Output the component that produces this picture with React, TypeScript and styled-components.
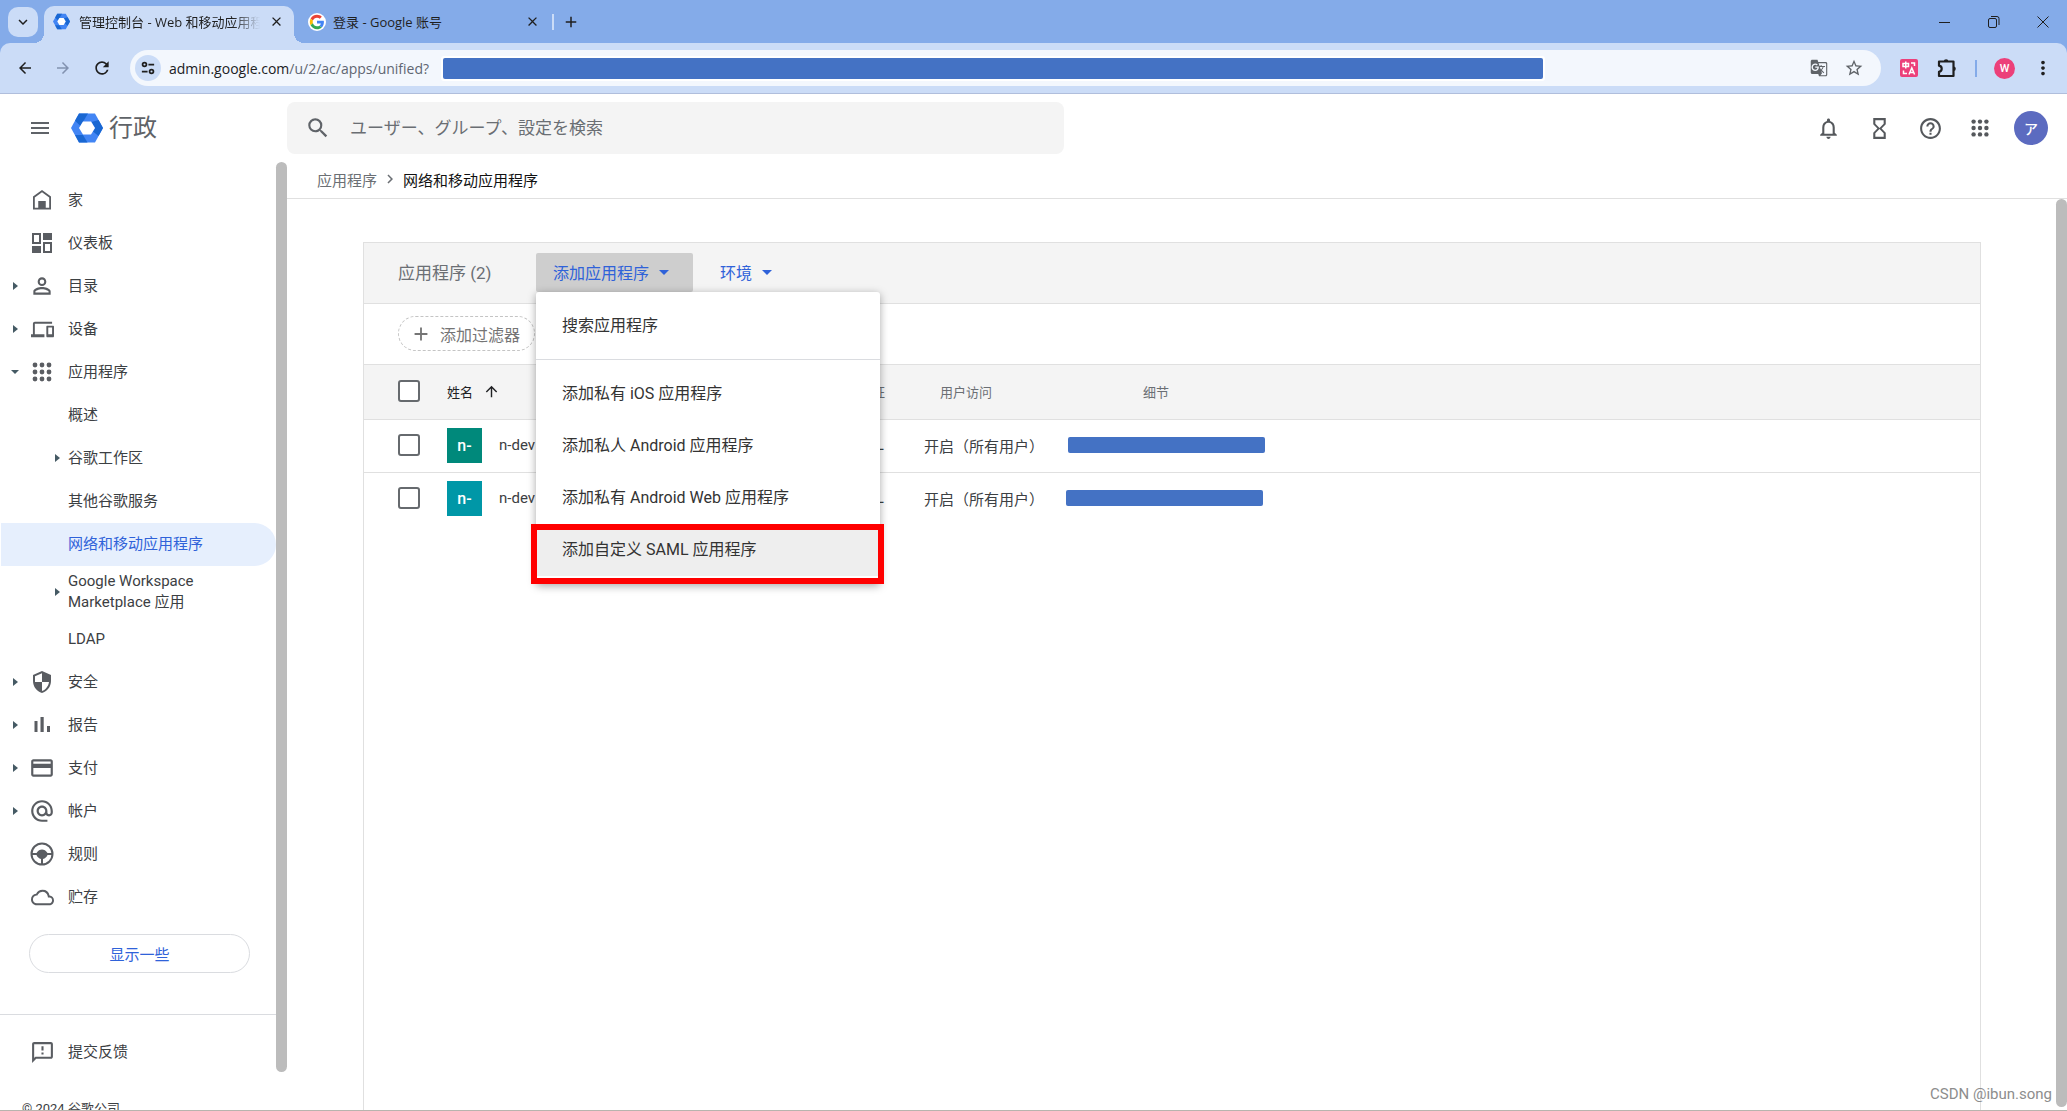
import React from 'react';
import styled, { createGlobalStyle, css } from 'styled-components';
import {
  MdPersonOutline, MdDevices, MdCreditCard, MdAlternateEmail, MdOutlineCloud, MdOutlineFeedback,
  MdSearch, MdMenu, MdNotificationsNone, MdHelpOutline, MdArrowBack, MdArrowForward, MdRefresh,
  MdStarBorder, MdMoreVert, MdArrowUpward, MdAdd, MdClose, MdGTranslate, MdChevronRight,
  MdArrowDropDown, MdHourglassEmpty, MdKeyboardArrowDown,
} from 'react-icons/md';

const uiFont = `Roboto, "Noto Sans CJK SC", sans-serif`;
const chromeFont = `"Open Sans", "Noto Sans CJK SC", sans-serif`;

const Global = createGlobalStyle`
  *, *::before, *::after { box-sizing: border-box; }
  body { margin: 0; font-family: ${uiFont}; font-size: 15px; color: #3c4043; background: #fff; overflow: hidden; }
  button, input { font: inherit; color: inherit; }
  button { border: 0; background: none; padding: 0; margin: 0; cursor: pointer; }
  a { color: inherit; text-decoration: none; }
  ul { list-style: none; margin: 0; padding: 0; }
  svg { display: block; flex: none; }
`;

const Shell = styled.div`
  height: 100vh; display: flex; flex-direction: column; overflow: hidden;
  border-bottom: 1px solid #b8b4ae;
`;

/* Browser chrome */
const Chrome = styled.div`
  flex: none; background: #84abe9; color: #1f1f1f; font-family: ${chromeFont};
`;
const TabStrip = styled.div`
  height: 43px; display: flex; align-items: center; padding-left: 8px; font-size: 13px;
`;
const TabSearch = styled.button`
  width: 30px; height: 30px; border-radius: 10px; background: #cbdcf7; display: grid; place-items: center; margin-right: 6px;
`;
const Tab = styled.div<{ $active?: boolean }>`
  position: relative; width: ${p => (p.$active ? 250 : 256)}px; height: 37px; align-self: flex-end;
  display: flex; align-items: center; gap: ${p => (p.$active ? 9 : 7)}px;
  padding: 0 10px 6px ${p => (p.$active ? 9 : 14)}px;
  ${p => p.$active && css`
    background: #cbdcf7; border-radius: 10px 10px 0 0;
    &::before, &::after { content: ''; position: absolute; bottom: 0; width: 10px; height: 10px; }
    &::before { left: -10px; background: radial-gradient(circle at 0 0, transparent 10px, #cbdcf7 10px); }
    &::after { right: -10px; background: radial-gradient(circle at 100% 0, transparent 10px, #cbdcf7 10px); }
  `}
`;
const TabTitle = styled.span<{ $fade?: boolean }>`
  flex: 1; min-width: 0; overflow: hidden; white-space: nowrap; line-height: 20px;
  ${p => p.$fade && css`mask-image: linear-gradient(to right, #000 85%, transparent 100%);`}
`;
const TabDivider = styled.span` width: 2px; height: 16px; background: #cbdcf7; margin: 0 8px 0 2px; `;
const WindowControls = styled.div` margin-left: auto; display: flex; `;
const WindowButton = styled.button` width: 49px; height: 43px; display: grid; place-items: center; `;

const Toolbar = styled.div`
  height: 51px; display: flex; align-items: center; padding: 0 7px 0 12px; border-radius: 10px 10px 0 0;
  background: #cbdcf7; border-bottom: 1px solid #b0bedc;
`;
const ToolButton = styled.button<{ $dim?: boolean; $w?: number }>`
  width: ${p => p.$w ?? 38}px; height: 34px; display: grid; place-items: center; color: ${p => (p.$dim ? '#8292b0' : '#1f1f1f')};
`;
const AddressBar = styled.div`
  flex: 1; height: 36px; border-radius: 18px; background: #f3f7fd; margin: 0 9px 0 14px;
  display: flex; align-items: center; padding: 0 17px 0 5px;
`;
const SiteInfo = styled.button`
  width: 26px; height: 26px; border-radius: 13px; background: #cbdcf7; display: grid; place-items: center; margin-right: 8px;
`;
const Url = styled.span` min-width: 272px; font-size: 14px; color: #5f6672; white-space: nowrap; `;
const Host = styled.span` color: #202124; `;
const Redaction = styled.span<{ $w: number; $h?: number }>`
  display: block; width: ${p => p.$w}px; height: ${p => p.$h ?? 16}px; border-radius: 2px; background: #4472c4;
`;
const UrlMask = styled.span` flex: none; background: #fff; border-radius: 3px; padding: 2px; `;
const Spacer = styled.span` flex: 1; `;
const Profile = styled.span<{ $size: number; $bg: string; $fs: number }>`
  width: ${p => p.$size}px; height: ${p => p.$size}px; border-radius: 50%; background: ${p => p.$bg}; color: #fff;
  display: grid; place-items: center; font: 500 ${p => p.$fs}px Roboto, "Noto Sans CJK JP", sans-serif;
`;
const ToolDivider = styled.span` width: 2px; height: 17px; background: #84abe9; margin: 0 17px 0 9px; `;
const ProfileButton = styled.button` margin-right: 11px; `;

/* Admin console header */
const Header = styled.header` flex: none; height: 68px; display: flex; align-items: center; padding: 0 19px 0 28px; color: #5f6368; `;
const Brand = styled.a` width: 216px; display: flex; align-items: center; gap: 6px; margin-left: 19px; font-size: 24px; line-height: 32px; `;
const SearchBox = styled.label`
  width: 777px; height: 52px; border-radius: 8px; background: #f4f4f4; display: flex; align-items: center; gap: 19px; padding: 0 18px;
`;
const SearchInput = styled.input`
  flex: 1; border: 0; background: none; outline: 0; padding: 0; font: 17px Roboto, "Noto Sans CJK JP", sans-serif;
  &::placeholder { color: #6a6e73; opacity: 1; }
`;
const HeaderActions = styled.div` margin: 0 23px 0 auto; display: flex; align-items: center; gap: 26px; color: #55585c; `;

/* Body */
const Body = styled.div` flex: 1; min-height: 0; display: flex; `;
const Sidebar = styled.aside` width: 287px; flex: none; display: flex; `;
const SideScroll = styled.div` flex: 1; overflow: hidden; padding-top: 17px; `;
const Thumb = styled.div<{ $bottom: number }>`
  width: 11px; flex: none; border-radius: 6px; background: #bcbcbc; margin: 0 0 ${p => p.$bottom}px;
`;
const NavLink = styled.a<{ $active?: boolean; $tall?: boolean }>`
  height: ${p => (p.$tall ? 52 : 43)}px; display: grid; grid-template-columns: 28px 26px 13px 1fr; align-items: center;
  line-height: ${p => (p.$tall ? 21 : 20)}px; font-size: 15px; border-radius: 0 22px 22px 0; margin-left: 1px; padding-bottom: 1px;
  ${p => p.$active && css`background: #e6effd; color: #2f62d9;`}
`;
const Arrow = styled.span<{ $open?: boolean; $nested?: boolean }>`
  grid-row: 1; grid-column: ${p => (p.$nested ? '2 / 4' : '1')}; justify-self: ${p => (p.$nested ? 'end' : 'center')};
  ${p => p.$nested && css`margin-right: 8px;`}
  width: 0; height: 0; border: 4px solid transparent; color: #455a64;
  ${p => p.$open
    ? css`border-top-color: currentColor; border-bottom-width: 0;`
    : css`border-left-color: currentColor; border-right-width: 0; border-left-width: 5px;`}
`;
const NavIcon = styled.span` grid-row: 1; grid-column: 2; color: #5a5d62; display: grid; place-items: center; `;
const NavText = styled.span` grid-row: 1; grid-column: 4; `;
const ShowSome = styled.button`
  display: block; width: 221px; height: 39px; margin: 15px 0 41px 29px; border: 1px solid #dadce0; border-radius: 20px; color: #2f62d9;
`;
const SideFooter = styled.div` border-top: 1px solid #dadce0; padding-top: 16px; `;
const Copyright = styled.div` padding: 25px 22px 0; font-size: 13px; line-height: 20px; `;

const Main = styled.main` flex: 1; min-width: 0; display: flex; flex-direction: column; `;
const Breadcrumb = styled.nav`
  flex: none; height: 37px; border-bottom: 1px solid #e0e0e0; padding: 0 0 2px 30px; display: flex; align-items: center; gap: 4px; color: #6b6f74;
`;
const Current = styled.span` color: #111; `;
const Content = styled.div` flex: 1; min-height: 0; display: flex; `;
const PanelWrap = styled.div` flex: 1; min-width: 0; padding: 43px 75px 0 76px; display: flex; `;
const Panel = styled.section` flex: 1; border: 1px solid #e0e0e0; border-bottom: 0; `;
const PanelHead = styled.div`
  height: 61px; background: #f4f4f4; border-bottom: 1px solid #e0e0e0; display: flex; align-items: center; padding: 0 0 1px 34px;
`;
const PanelTitle = styled.h1` margin: 0; width: 138px; font-size: 17px; line-height: 20px; font-weight: 400; color: #6b6f74; `;
const MenuAnchor = styled.div` position: relative; margin-right: 10px; `;
const DropButton = styled.button<{ $open?: boolean }>`
  height: 39px; display: flex; align-items: center; gap: 3px; padding: 0 17px 2px; font-size: 16px; color: #2f62d9; border-radius: 2px;
  ${p => p.$open && css`background: #cecece;`}
`;
const Menu = styled.ul`
  position: absolute; top: 100%; left: 0; width: 344px; background: #fff; padding: 8px 0; border-radius: 3px; z-index: 2;
  box-shadow: 0 2px 8px rgba(0,0,0,.35); color: #333;
`;
const MenuButton = styled.button<{ $hover?: boolean }>`
  display: block; width: 100%; height: 52px; padding: 0 26px 4px; text-align: left; font-size: 16px; white-space: nowrap;
  background: ${p => (p.$hover ? '#eee' : 'none')};
`;
const MenuRule = styled.li` height: 1px; background: #dadce0; margin: 7px 0 8px; `;
const MarkedItem = styled.li`
  position: relative;
  &::after { content: ''; position: absolute; top: 0; left: -5px; right: -4px; bottom: -8px; border: 6px solid #f00; pointer-events: none; }
`;
const FilterRow = styled.div` height: 60px; display: flex; align-items: center; padding: 0 0 1px 34px; `;
const FilterChip = styled.button`
  height: 35px; border: 1px dashed #c4c4c4; border-radius: 18px; display: flex; align-items: center; gap: 8px; padding: 0 14px 0 11px;
  font-size: 16px; color: #757575;
`;
const Table = styled.table` width: 100%; border-collapse: collapse; table-layout: fixed; text-align: left; `;
const Th = styled.th<{ $strong?: boolean; $pad?: number }>`
  height: 55px; padding: 0 0 2px ${p => p.$pad ?? 0}px; font-size: 13px; font-weight: 400; background: #f4f4f4; white-space: nowrap;
  border-top: 1px solid #e0e0e0; border-bottom: 1px solid #e0e0e0; color: ${p => (p.$strong ? '#202124' : '#6b6f74')};
`;
const Td = styled.td<{ $pad?: number }>` height: 53px; padding: 0 0 2px ${p => p.$pad ?? 0}px; white-space: nowrap; `;
const Tr = styled.tr` & + & { border-top: 1px solid #e0e0e0; } `;
const Check = styled.input`
  appearance: none; display: block; width: 22px; height: 22px; margin: 0; border: 2px solid #666a6e; border-radius: 3px; background: #fff;
`;
const Inline = styled.span<{ $gap: number }>` display: flex; align-items: center; gap: ${p => p.$gap}px; `;
const AppTile = styled.span<{ $bg: string }>`
  width: 35px; height: 35px; background: ${p => p.$bg}; color: #fff; display: grid; place-items: center; font-size: 16px; font-weight: 500;
`;
const Watermark = styled.div`
  position: absolute; right: 15px; bottom: 8px; font: 15px Roboto, sans-serif; color: #8d8d8d;
`;

/* Drawings */
const Ic = ({ size = 24, children }: { size?: number; children: React.ReactNode }) => (
  <svg width={size} height={size} viewBox="0 0 24 24" fill="currentColor" aria-hidden="true">{children}</svg>
);
const HomeIcon = () => <Ic><path d="M3 21.500V8.500L12 2l9 6.500v13zM4.800 9.500v10.200H8.500V13h7v6.700h3.700V9.500L12 4.200z" fillRule="evenodd" /><path d="M8.500 13h7v8h-7z" /></Ic>;
const DashIcon = () => <Ic><path d="M2 2h9v11H2zM4 4v7h5V4zM13 11h9v11h-9zM15 13v7h5v-7z" fillRule="evenodd" /><path d="M13 2h9v7h-9zM2 15h9v7H2z" /></Ic>;
const GridIcon = ({ size = 24 }: { size?: number }) => (
  <Ic size={size}>{[5, 12, 19].flatMap(y => [5, 12, 19].map(x => <circle key={`${x}-${y}`} cx={x} cy={y} r="2.400" />))}</Ic>
);
const ShieldIcon = () => (
  <Ic><path d="M12 1L3 5v6c0 5.550 3.840 10.740 9 12 5.160-1.260 9-6.450 9-12V5zM12 3.200L5 6.300V12h7v8.940c3.720-1.150 6.470-4.820 7-8.940h-7z" fillRule="evenodd" /></Ic>
);
const BarsIcon = () => <Ic><path d="M4.500 8h3v11h-3zM10.500 4h3.200v15h-3.200zM17 13h3v6h-3z" /></Ic>;
const WheelIcon = () => (
  <Ic><circle cx="12" cy="12" r="10.500" fill="none" stroke="currentColor" strokeWidth="2" />
    <path d="M2 11h4.500C8 8.500 10 7.500 12 7.500s4 1 5.500 3.500H22v2h-4.500c-.8 2-2.500 3.500-4.500 4V22h-2v-5c-2-.5-3.700-2-4.500-4H2z" /></Ic>
);
const PuzzleIcon = () => (
  <svg width="22" height="22" viewBox="0 0 22 22" fill="none" stroke="currentColor" strokeWidth="2.200" strokeLinejoin="round" aria-hidden="true">
    <path d="M3 4.500h14.500V19H3v-4.200c3.600-.6 3.600-5.500 0-6.100z" />
    <path d="M7.800 4.500a2.300 2.300 0 0 1 4.600 0zM17.500 9.500a2.300 2.300 0 0 1 0 4.600z" fill="currentColor" stroke="none" />
  </svg>
);
const HexLogo = ({ size }: { size: number }) => (
  <svg width={size} height={size} viewBox="0 0 32 32" aria-hidden="true">
    <path d="M8 1.500h16l8 14.500-8 14.500H8L0 16z" fill="#4285f4" />
    <path d="M8 1.500h9L12.500 9 9.500 14 4 8.700z" fill="#1967d2" />
    <path d="M27.600 8L32 16l-4.500 8-5.500-4.500 2-3.500-3.500-6z" fill="#1967d2" />
    <path d="M4 23h8l4.500 7.500H8z" fill="#1967d2" />
    <path d="M12 9.500h8l4 6.500-4 6.500h-8L8 16z" fill="#fff" />
  </svg>
);
const GoogleLogo = () => (
  <svg width="18" height="18" viewBox="-6 -6 60 60" aria-hidden="true">
    <circle cx="24" cy="24" r="30" fill="#fff" />
    <path fill="#EA4335" d="M24 9.500c3.540 0 6.710 1.220 9.210 3.600l6.850-6.850C35.900 2.380 30.470 0 24 0 14.620 0 6.510 5.380 2.560 13.220l7.980 6.190C12.430 13.720 17.740 9.500 24 9.500z" />
    <path fill="#4285F4" d="M46.980 24.550c0-1.570-.15-3.090-.38-4.550H24v9.020h12.940c-.58 2.960-2.260 5.480-4.780 7.180l7.730 6c4.510-4.180 7.090-10.360 7.090-17.650z" />
    <path fill="#FBBC05" d="M10.530 28.590c-.48-1.450-.76-2.990-.76-4.590s.27-3.140.76-4.590l-7.980-6.190C.92 16.460 0 20.120 0 24c0 3.880.92 7.540 2.560 10.780l7.970-6.190z" />
    <path fill="#34A853" d="M24 48c6.480 0 11.930-2.130 15.890-5.810l-7.730-6c-2.150 1.450-4.920 2.300-8.160 2.300-6.260 0-11.570-4.220-13.470-9.910l-7.980 6.190C6.510 42.620 14.620 48 24 48z" />
  </svg>
);
const TuneIcon = () => (
  <svg width="14" height="14" viewBox="0 0 16 16" fill="none" stroke="#1f1f1f" strokeWidth="2" aria-hidden="true">
    <circle cx="4" cy="4" r="2.200" /><path d="M8.500 4H15M1 12h6.500" /><circle cx="12" cy="12" r="2.200" />
  </svg>
);
const TranslateExt = () => (
  <svg width="18" height="18" viewBox="0 0 18 18" fill="none" stroke="#fff" strokeWidth="1.500" aria-hidden="true">
    <rect width="18" height="18" rx="2" fill="#ec407a" stroke="none" />
    <path d="M3 4.500h5.500V7.500H3zM5.750 2.500v7M11 4h3.500v3M3.500 11.500v3H7M9 15.500l2.800-6.500 2.800 6.500M10 13.500h3.600" />
  </svg>
);

type Item = { text: React.ReactNode; icon?: React.ReactNode; arrow?: 'closed' | 'open' | 'nested'; active?: boolean; tall?: boolean };
const nav: Item[] = [
  { text: '家', icon: <HomeIcon /> },
  { text: '仪表板', icon: <DashIcon /> },
  { text: '目录', icon: <MdPersonOutline size={26} />, arrow: 'closed' },
  { text: '设备', icon: <MdDevices size={23} />, arrow: 'closed' },
  { text: '应用程序', icon: <GridIcon />, arrow: 'open' },
  { text: '概述' },
  { text: '谷歌工作区', arrow: 'nested' },
  { text: '其他谷歌服务' },
  { text: '网络和移动应用程序', active: true },
  { text: <>Google Workspace<br />Marketplace 应用</>, arrow: 'nested', tall: true },
  { text: 'LDAP' },
  { text: '安全', icon: <ShieldIcon />, arrow: 'closed' },
  { text: '报告', icon: <BarsIcon />, arrow: 'closed' },
  { text: '支付', icon: <MdCreditCard size={26} />, arrow: 'closed' },
  { text: '帐户', icon: <MdAlternateEmail size={26} />, arrow: 'closed' },
  { text: '规则', icon: <WheelIcon /> },
  { text: '贮存', icon: <MdOutlineCloud size={23} /> },
];
const NavRow = ({ item }: { item: Item }) => (
  <li>
    <NavLink href="#" $active={item.active} $tall={item.tall}>
      {item.arrow && <Arrow $open={item.arrow === 'open'} $nested={item.arrow === 'nested'} />}
      {item.icon && <NavIcon>{item.icon}</NavIcon>}
      <NavText>{item.text}</NavText>
    </NavLink>
  </li>
);

const apps = [{ color: '#00897b', pad: 54 }, { color: '#0097a7', pad: 52 }];
const privateApps = ['添加私有 iOS 应用程序', '添加私人 Android 应用程序', '添加私有 Android Web 应用程序'];

export default function App() {
  return (
    <Shell>
      <Global />
      <Chrome>
        <TabStrip>
          <TabSearch aria-label="搜索标签页"><MdKeyboardArrowDown size={18} /></TabSearch>
          <Tab $active>
            <HexLogo size={17} /><TabTitle $fade>管理控制台 - Web 和移动应用程序</TabTitle>
            <button aria-label="关闭"><MdClose size={15} /></button>
          </Tab>
          <Tab>
            <GoogleLogo /><TabTitle>登录 - Google 账号</TabTitle>
            <button aria-label="关闭"><MdClose size={15} /></button>
          </Tab>
          <TabDivider />
          <button aria-label="新标签页"><MdAdd size={18} /></button>
          <WindowControls>
            <WindowButton aria-label="最小化"><svg width="12" height="12" viewBox="0 0 12 12"><path d="M0 6.500h11" stroke="#1f1f1f" /></svg></WindowButton>
            <WindowButton aria-label="还原"><svg width="12" height="12" viewBox="0 0 12 12" fill="none" stroke="#1f1f1f"><rect x=".5" y="2.500" width="8" height="9" rx="1.500" /><path d="M3 .5h6a2 2 0 0 1 2 2v6.500" /></svg></WindowButton>
            <WindowButton aria-label="关闭窗口"><svg width="12" height="12" viewBox="0 0 12 12"><path d="M.5.500l11 11M11.500.500l-11 11" stroke="#1f1f1f" /></svg></WindowButton>
          </WindowControls>
        </TabStrip>
        <Toolbar>
          <ToolButton $w={26} aria-label="后退"><MdArrowBack size={18} /></ToolButton>
          <ToolButton $w={50} $dim aria-label="前进"><MdArrowForward size={18} /></ToolButton>
          <ToolButton $w={28} aria-label="刷新"><MdRefresh size={20} /></ToolButton>
          <AddressBar>
            <SiteInfo aria-label="网站信息"><TuneIcon /></SiteInfo>
            <Url><Host>admin.google.com</Host>/u/2/ac/apps/unified?</Url>
            <UrlMask><Redaction $w={1100} $h={21} /></UrlMask>
            <Spacer />
            <Inline $gap={16}><MdGTranslate size={18} color="#5f6368" /><MdStarBorder size={20} color="#5f6368" /></Inline>
          </AddressBar>
          <ToolButton aria-label="翻译扩展"><TranslateExt /></ToolButton>
          <ToolButton aria-label="扩展程序"><PuzzleIcon /></ToolButton>
          <ToolDivider />
          <ProfileButton aria-label="个人资料"><Profile $size={21} $bg="#ec407a" $fs={11}>W</Profile></ProfileButton>
          <ToolButton $w={34} aria-label="更多"><MdMoreVert size={22} /></ToolButton>
        </Toolbar>
      </Chrome>

      <Header>
        <button aria-label="主菜单"><MdMenu size={24} /></button>
        <Brand href="#"><HexLogo size={32} />行政</Brand>
        <SearchBox>
          <MdSearch size={26} />
          <SearchInput placeholder="ユーザー、グループ、設定を検索" />
        </SearchBox>
        <HeaderActions>
          <button aria-label="通知"><MdNotificationsNone size={25} /></button>
          <button aria-label="任务"><MdHourglassEmpty size={25} /></button>
          <button aria-label="帮助"><MdHelpOutline size={25} /></button>
          <button aria-label="应用"><GridIcon size={22} /></button>
        </HeaderActions>
        <button aria-label="帐号"><Profile $size={34} $bg="#5c6bc0" $fs={14}>ア</Profile></button>
      </Header>

      <Body>
        <Sidebar>
          <SideScroll>
            <ul>{nav.map((item, i) => <NavRow key={i} item={item} />)}</ul>
            <ShowSome>显示一些</ShowSome>
            <SideFooter>
              <NavLink href="#"><NavIcon><MdOutlineFeedback size={25} /></NavIcon><NavText>提交反馈</NavText></NavLink>
              <Copyright>© 2024 谷歌公司</Copyright>
            </SideFooter>
          </SideScroll>
          <Thumb $bottom={38} />
        </Sidebar>
        <Main>
          <Breadcrumb><a href="#">应用程序</a><MdChevronRight size={18} /><Current>网络和移动应用程序</Current></Breadcrumb>
          <Content>
            <PanelWrap>
              <Panel>
                <PanelHead>
                  <PanelTitle>应用程序 (2)</PanelTitle>
                  <MenuAnchor>
                    <DropButton $open>添加应用程序<MdArrowDropDown size={24} /></DropButton>
                    <Menu>
                      <li><MenuButton>搜索应用程序</MenuButton></li>
                      <MenuRule />
                      {privateApps.map(t => <li key={t}><MenuButton>{t}</MenuButton></li>)}
                      <MarkedItem><MenuButton $hover>添加自定义 SAML 应用程序</MenuButton></MarkedItem>
                    </Menu>
                  </MenuAnchor>
                  <DropButton>环境<MdArrowDropDown size={24} /></DropButton>
                </PanelHead>
                <FilterRow><FilterChip><MdAdd size={22} />添加过滤器</FilterChip></FilterRow>
                <Table>
                  <colgroup><col width="83" /><col width="360" /><col width="117" /><col width="90" /><col /></colgroup>
                  <thead>
                    <tr>
                      <Th $pad={34}><Check type="checkbox" aria-label="全选" /></Th>
                      <Th $strong><Inline $gap={10}>姓名<MdArrowUpward size={17} /></Inline></Th>
                      <Th $pad={26}>身份验证</Th>
                      <Th $pad={16}>用户访问</Th>
                      <Th $pad={129}>细节</Th>
                    </tr>
                  </thead>
                  <tbody>
                    {apps.map(a => (
                      <Tr key={a.color}>
                        <Td $pad={34}><Check type="checkbox" aria-label="n-dev" /></Td>
                        <Td><Inline $gap={17}><AppTile $bg={a.color}>n-</AppTile>n-dev</Inline></Td>
                        <Td $pad={37}>SAML</Td>
                        <Td>开启（所有用户）</Td>
                        <Td $pad={a.pad}><Redaction $w={197} /></Td>
                      </Tr>
                    ))}
                  </tbody>
                </Table>
              </Panel>
            </PanelWrap>
            <Thumb $bottom={3} />
          </Content>
        </Main>
      </Body>
      <Watermark>CSDN @ibun.song</Watermark>
    </Shell>
  );
}
